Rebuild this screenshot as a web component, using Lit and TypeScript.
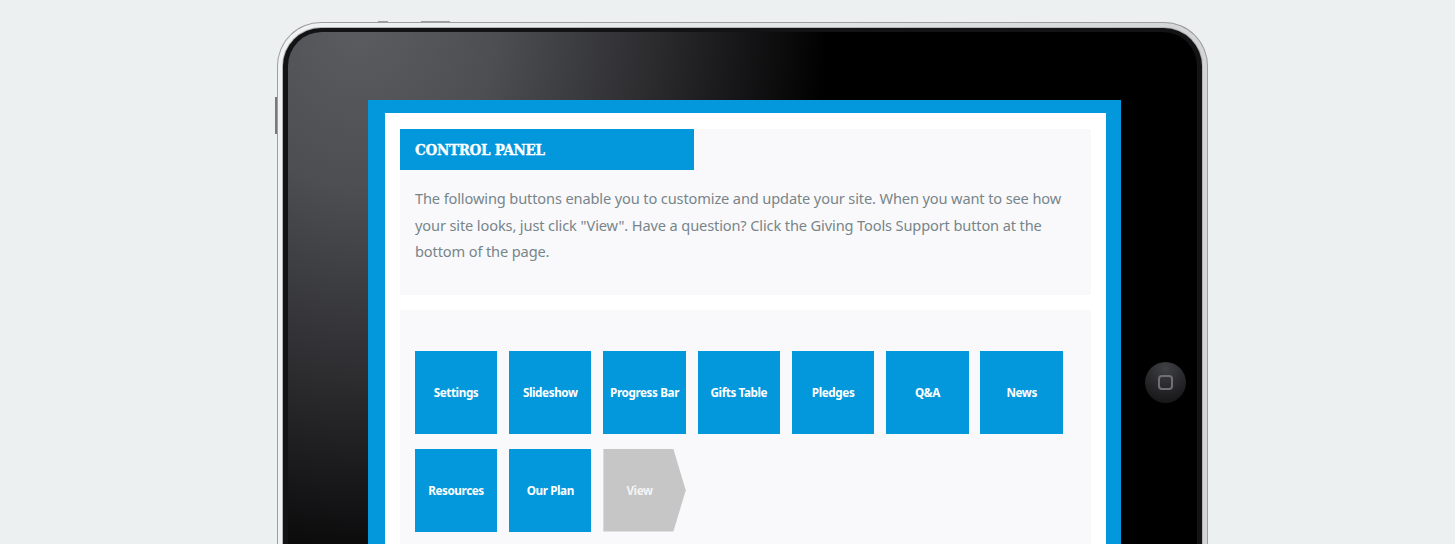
import { LitElement, html, css } from "lit";
import { customElement } from "lit/decorators.js";

const tiles = ["Settings", "Slideshow", "Progress Bar", "Gifts Table", "Pledges", "Q&A", "News", "Resources", "Our Plan"];

@customElement("app-root")
export class AppRoot extends LitElement {
  static styles = css`
    :host {
      display: block;
      height: 544px;
      overflow: hidden;
      background: #ecf0f1;
      font-family: "Noto Sans", "Open Sans", sans-serif;
    }
    .stage {
      padding: 22px 0 0 277px;
    }
    .device {
      position: relative;
      width: 931px;
      height: 700px;
      box-sizing: border-box;
      padding: 6px;
      border-radius: 44px;
      background: linear-gradient(90deg, #f1f2f2 0, #e6e7e8 50%, #d4d5d6 100%);
      box-shadow: inset 0 0 0 1px #9c9ea0;
    }
    .bezel {
      height: 100%;
      box-sizing: border-box;
      padding: 4px 5px 0;
      background: #131315;
      border-radius: 38px;
      box-shadow: 0 0 0 1px #b4b5b6;
    }
    .glass {
      position: relative;
      height: 100%;
      box-sizing: border-box;
      padding: 68px 76px 0 80px;
      border-radius: 34px;
      background: radial-gradient(ellipse 470px 590px at 70px -20px, #5c5d61 0, #4d4e52 30%, #2d2d30 62%, #0a0a0b 92%, #000 100%);
    }
    .btn-side {
      position: absolute;
      left: -2px;
      top: 75px;
      width: 2px;
      height: 37px;
      background: #77797b;
    }
    .btn-top {
      position: absolute;
      top: -1px;
      height: 1px;
      background: #9b9d9f;
    }
    .btn-top.a { left: 101px; width: 10px; }
    .btn-top.b { left: 144px; width: 29px; }
    .home {
      position: absolute;
      left: 868px;
      top: 340px;
      width: 41px;
      height: 41px;
      border-radius: 50%;
      background: radial-gradient(circle at 50% 15%, #404144 0, #2a2a2d 45%, #101012 100%);
      display: flex;
      align-items: center;
      justify-content: center;
    }
    .home i {
      display: block;
      width: 11px;
      height: 11px;
      border: 2px solid #6f7073;
      border-radius: 4px;
    }
    .frame {
      background: #0398dc;
      padding: 13px 15px 0 17px;
      height: 600px;
    }
    .paper {
      background: #fff;
      height: 100%;
      padding: 16px 15px 0;
      display: flex;
      flex-direction: column;
      gap: 15px;
    }
    .panel {
      background: #f9f9fb;
    }
    .intro {
      height: 166px;
    }
    h1 {
      margin: 0;
      width: 294px;
      height: 41px;
      box-sizing: border-box;
      padding-left: 15px;
      background: #0398dc;
      color: #fff;
      font-family: "DejaVu Serif", serif;
      font-weight: 700;
      font-stretch: condensed;
      font-size: 15px;
      letter-spacing: -0.3px;
      -webkit-text-stroke: 0.3px #fff;
      line-height: 43px;
      white-space: nowrap;
    }
    p {
      margin: 0;
      padding: 15px 15px 0;
      color: #77858a;
      font-size: 14.6px;
      letter-spacing: -0.13px;
      line-height: 26.5px;
      white-space: nowrap;
    }
    .tiles {
      flex: 1;
      padding: 41px 15px 0 14.8px;
      display: flex;
      flex-wrap: wrap;
      align-content: flex-start;
      column-gap: 11.9px;
      row-gap: 15.6px;
    }
    .tile {
      width: 82.4px;
      height: 82.5px;
      display: flex;
      align-items: center;
      justify-content: center;
      background: #0398dc;
      color: #fff;
      font-size: 11.7px;
      letter-spacing: -0.4px;
      font-weight: 700;
      white-space: nowrap;
    }
    .tile.view {
      background: #c6c6c6;
      color: #f4f4f4;
      padding-right: 10px;
      box-sizing: border-box;
      clip-path: polygon(0 0, 85% 0, 100% 50%, 85% 100%, 0 100%);
    }
  `;

  render() {
    return html`
      <div class="stage">
        <div class="device">
          <div class="btn-side"></div>
          <div class="btn-top a"></div>
          <div class="btn-top b"></div>
          <div class="bezel">
            <div class="glass">
              <div class="frame">
                <div class="paper">
                  <section class="panel intro">
                    <h1>CONTROL PANEL</h1>
                    <p>The following buttons enable you to customize and update your site. When you want to see how<br />your site looks, just click "View". Have a question? Click the Giving Tools Support button at the<br />bottom of the page.</p>
                  </section>
                  <section class="panel tiles">
                    ${tiles.map((t) => html`<div class="tile">${t}</div>`)}
                    <div class="tile view">View</div>
                  </section>
                </div>
              </div>
            </div>
          </div>
          <div class="home"><i></i></div>
        </div>
      </div>
    `;
  }
}
